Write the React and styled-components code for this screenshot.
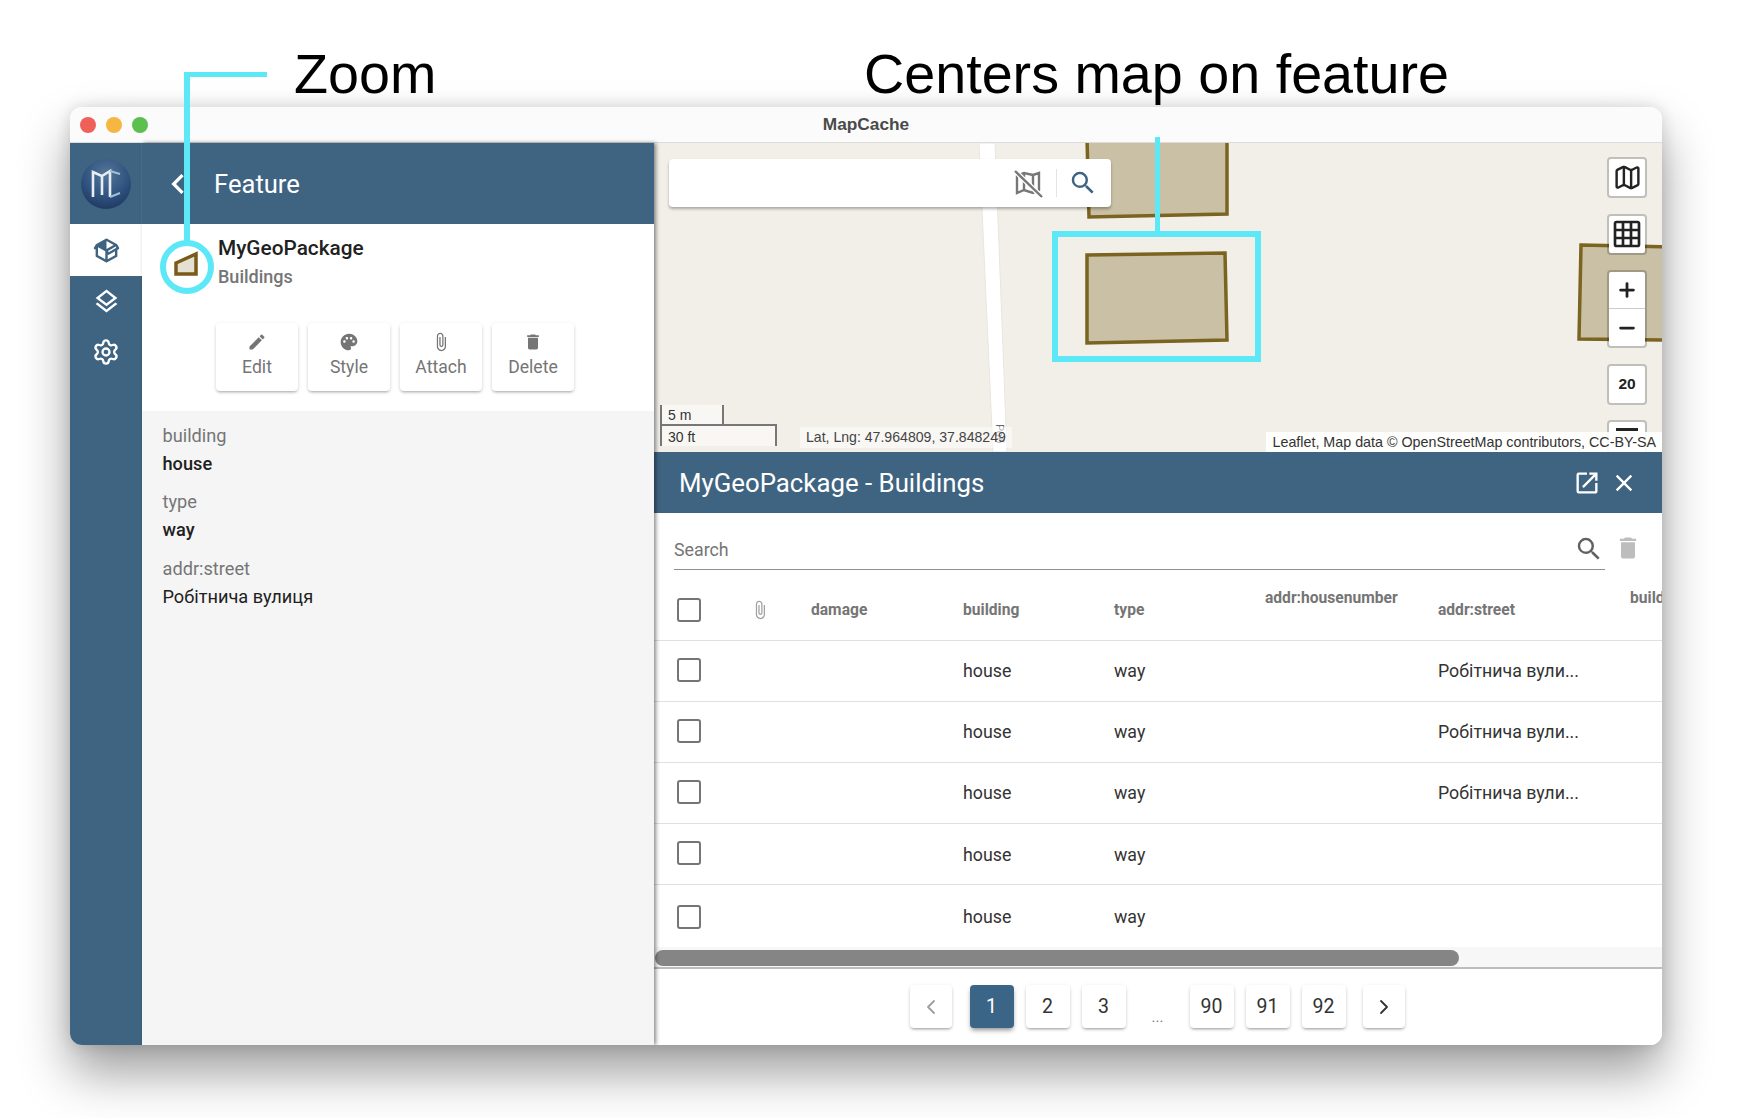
import styled, { createGlobalStyle } from 'styled-components';
import { MdEdit, MdPalette, MdAttachFile, MdDelete, MdSearch, MdClose, MdOpenInNew, MdChevronLeft, MdGridOn } from 'react-icons/md';
import { Map as MapIcon, Settings, Plus, Minus, ChevronLeft, ChevronRight } from 'lucide-react';

const BLUE = '#3f6482';
const CYAN = '#5de8f7';

const GlobalStyle = createGlobalStyle`
    html, body {
        margin: 0;
        background: #fff;
        overflow: hidden;
    }
    * { box-sizing: border-box; }
`;

const Page = styled.div`
    position: relative;
    width: 1740px;
    height: 1118px;
    padding: 107px 0 0 70px;
    overflow: hidden;
    font-family: Roboto, "Liberation Sans", sans-serif;
    color: #212121;
`;

const Window = styled.div`
    width: 1592px;
    height: 938px;
    display: flex;
    flex-direction: column;
    border-radius: 12px;
    overflow: hidden;
    background: #fff;
    box-shadow: 0 28px 50px rgba(0, 0, 0, .38), 0 0 16px rgba(0, 0, 0, .14);
`;

const TitleBar = styled.div`
    position: relative;
    flex: 0 0 36px;
    display: flex;
    align-items: center;
    justify-content: center;
    background: #fbfbfb;
    border-bottom: 1px solid #dcdcdc;
    font: bold 17.3px "Liberation Sans", Arial, sans-serif;
    color: #4a4a4a;
`;

const Lights = styled.div`
    position: absolute;
    left: 10px;
    top: 10px;
    display: flex;
    gap: 10px;
`;

const Light = styled.span`
    width: 16px;
    height: 16px;
    border-radius: 50%;
    background: ${p => p.$color};
`;

const Body = styled.div`
    flex: 1;
    display: flex;
    min-height: 0;
`;

const Sidebar = styled.div`
    flex: 0 0 72px;
    display: flex;
    flex-direction: column;
    background: ${BLUE};
`;

const LogoCell = styled.div`
    height: 81px;
    display: flex;
    align-items: center;
    justify-content: center;
    border-right: 1px solid #4c7090;
`;

const NavItem = styled.div`
    height: ${p => p.$h}px;
    display: flex;
    align-items: center;
    justify-content: center;
    color: ${p => (p.$active ? BLUE : '#fff')};
    background: ${p => (p.$active ? '#fff' : 'transparent')};
`;

const LeftPanel = styled.div`
    position: relative;
    z-index: 2;
    flex: 0 0 512px;
    display: flex;
    flex-direction: column;
    background: #f5f5f5;
    box-shadow: 2px 0 4px rgba(0, 0, 0, .45);
`;

const PanelHeader = styled.div`
    flex: 0 0 81px;
    display: flex;
    align-items: center;
    padding-left: 16px;
    background: ${BLUE};
    color: #fff;
    font-size: 25.6px;
`;

const BackIcon = styled(MdChevronLeft)`
    margin-right: 16px;
`;

const FeatureCard = styled.div`
    flex: 0 0 187px;
    background: #fff;
    padding-top: 10px;
`;

const FeatureTitle = styled.div`
    display: flex;
`;

const FeatureGlyph = styled.div`
    flex: 0 0 76px;
    display: flex;
    justify-content: center;
    padding: 17px 0 0 12px;
`;

const FeatureName = styled.div`
    font-size: 20.8px;
    font-weight: 500;
    line-height: 28px;
`;

const FeatureLayer = styled.div`
    font-size: 18px;
    font-weight: 500;
    line-height: 30px;
    color: #757575;
`;

const ActionRow = styled.div`
    display: flex;
    gap: 10px;
    margin: 31px 0 0 74px;
`;

const ActionButton = styled.div`
    width: 82px;
    height: 68px;
    display: flex;
    flex-direction: column;
    align-items: center;
    padding-top: 9px;
    background: #fff;
    border-radius: 4px;
    font-size: 17.6px;
    line-height: 30px;
    color: #757575;
    box-shadow: 0 2px 3px -1px rgba(0, 0, 0, .3), 0 1px 4px rgba(0, 0, 0, .1);
`;

const Details = styled.div`
    padding: 11px 20px 11px 20.5px;
`;

const DetailLabel = styled.div`
    font-size: 18.2px;
    line-height: 28px;
    color: #757575;
`;

const DetailValue = styled.div`
    font-size: 18.2px;
    font-weight: ${p => (p.$plain ? 400 : 500)};
    line-height: 28px;
    margin-bottom: 10.4px;
    color: #212121;
`;

const RightColumn = styled.div`
    flex: 1;
    min-width: 0;
    display: flex;
    flex-direction: column;
`;

const MapArea = styled.div`
    position: relative;
    flex: 0 0 309px;
    overflow: hidden;
    background: #f2efe9;
    font-family: "Liberation Sans", Arial, sans-serif;
`;

const MapDrawing = styled.svg`
    position: absolute;
    inset: 0;
`;

const SearchCard = styled.div`
    position: absolute;
    left: 15px;
    top: 16px;
    width: 442px;
    height: 48px;
    display: flex;
    align-items: center;
    justify-content: flex-end;
    padding-right: 13px;
    background: #fff;
    border-radius: 4px;
    box-shadow: 0 2px 3px rgba(0, 0, 0, .3);
`;

const SearchDivider = styled.span`
    width: 1px;
    height: 28px;
    margin: 0 11px 0 13px;
    background: #e4e4e4;
`;

const ControlStack = styled.div`
    position: absolute;
    top: 14px;
    right: 15px;
    display: flex;
    flex-direction: column;
    gap: 15.5px;
`;

const ControlButton = styled.div`
    width: 40px;
    height: 41px;
    display: flex;
    align-items: center;
    justify-content: center;
    background: #fff;
    border: 2px solid rgba(0, 0, 0, .2);
    border-radius: 4px;
    background-clip: padding-box;
    font: bold 15.5px "Liberation Sans", Arial, sans-serif;
    color: #222;
`;

const ZoomGroup = styled.div`
    width: 40px;
    display: flex;
    flex-direction: column;
    background: #fff;
    border: 2px solid rgba(0, 0, 0, .2);
    border-radius: 4px;
    background-clip: padding-box;
`;

const ZoomButton = styled.div`
    height: 37px;
    display: flex;
    align-items: center;
    justify-content: center;
    color: #222;
    border-bottom: ${p => (p.$first ? '1px solid #ccc' : 'none')};
`;

const MenuLine = styled.span`
    width: 22px;
    height: 3px;
    margin-bottom: 22px;
    background: #222;
`;

const ScaleBox = styled.div`
    position: absolute;
    left: 6px;
    bottom: 6px;
    display: flex;
    flex-direction: column;
    font-size: 14px;
    color: #333;
`;

const ScaleLine = styled.div`
    width: ${p => p.$w}px;
    height: ${p => p.$h}px;
    padding-left: 6px;
    line-height: ${p => p.$h}px;
    background: rgba(255, 255, 255, .5);
    border: 2px solid #777;
    border-top: ${p => (p.$top ? 'none' : '2px solid #777')};
    border-bottom: ${p => (p.$top ? '2px solid #777' : 'none')};
    margin-top: ${p => (p.$top ? 0 : -2)}px;
`;

const LatLng = styled.div`
    position: absolute;
    left: 146px;
    bottom: 4px;
    height: 21px;
    padding: 0 6px;
    line-height: 21px;
    font-size: 14.1px;
    color: #444;
    background: rgba(255, 255, 255, .5);
`;

const Attribution = styled.div`
    position: absolute;
    right: 0;
    bottom: 0;
    height: 20px;
    padding: 0 6px;
    line-height: 20px;
    font-size: 14.3px;
    color: #333;
    background: rgba(255, 255, 255, .9);
`;

const TablePanel = styled.div`
    position: relative;
    flex: 1;
    min-height: 0;
    display: flex;
    flex-direction: column;
    background: #fff;
`;

const TableTitle = styled.div`
    flex: 0 0 61px;
    display: flex;
    align-items: center;
    gap: 9px;
    padding: 0 24px 0 25px;
    background: ${BLUE};
    color: #fff;
    font-size: 25.8px;
`;

const TitleText = styled.span`
    flex: 1;
`;

const SearchRow = styled.div`
    flex: 0 0 57px;
    display: flex;
    align-items: flex-start;
    padding: 0 20px 0 20px;
`;

const SearchField = styled.div`
    flex: 1;
    height: 57px;
    display: flex;
    align-items: center;
    justify-content: space-between;
    padding: 16px 1px 0 0;
    border-bottom: 1.5px solid #8f8f8f;
    font-size: 17.8px;
    color: #757575;
`;

const TrashWrap = styled.div`
    width: 37px;
    height: 57px;
    display: flex;
    align-items: center;
    justify-content: flex-end;
    padding-top: 12px;
    color: #bdbdbd;
`;

const TableClip = styled.div`
    flex: 0 0 377px;
    overflow: hidden;
`;

const Table = styled.table`
    width: 1054px;
    table-layout: fixed;
    border-collapse: collapse;
`;

const HeadCell = styled.th`
    height: 70px;
    padding: 10px 0 ${p => (p.$raised ? 24 : 0)}px 22px;
    text-align: left;
    font-size: 15.6px;
    font-weight: 700;
    white-space: nowrap;
    color: #757575;
    border-bottom: 1px solid #e0e0e0;
`;

const BodyCell = styled.td`
    height: 61.2px;
    padding: ${p => (p.$last ? 2 : 0)}px 0 0 22px;
    font-size: 17.8px;
    color: #333;
    border-bottom: ${p => (p.$last ? 'none' : '1px solid #e0e0e0')};
`;

const CheckCell = styled(BodyCell)`
    padding: ${p => (p.$last ? '2px 0 0 23px' : '0 0 2px 23px')};
`;

const CheckHead = styled(HeadCell)`
    padding-left: 23px;
`;

const IconHead = styled(HeadCell)`
    padding-left: 0;
    text-align: center;
    color: #a0a0a0;
    svg { display: block; margin: 0 auto; }
`;

const CheckBox = styled.div`
    width: 24px;
    height: 24px;
    border: 2.5px solid #757575;
    border-radius: 3px;
`;

const ScrollTrack = styled.div`
    flex: 0 0 22px;
    padding: 3px 0 0 1px;
    background: #f7f7f7;
    border-bottom: 2px solid #bdbdbd;
`;

const ScrollThumb = styled.div`
    width: 804px;
    height: 16px;
    border-radius: 8px;
    background: #858585;
`;

const Pager = styled.div`
    display: flex;
    justify-content: center;
    gap: 12px;
    padding: 16px 2px 0 0;
`;

const PageButton = styled.div`
    width: ${p => (p.$arrow ? 42 : 44)}px;
    height: 43px;
    display: flex;
    align-items: center;
    justify-content: center;
    margin: ${p => p.$margin || 0};
    border-radius: 4px;
    font-size: 19.5px;
    background: ${p => (p.$active ? '#3b6587' : '#fff')};
    color: ${p => (p.$active ? '#fff' : p.$muted ? '#9e9e9e' : '#333')};
    box-shadow: ${p => (p.$active
        ? '0 3px 5px -1px rgba(0, 0, 0, .45)'
        : '0 2px 3px -1px rgba(0, 0, 0, .35), 0 1px 4px rgba(0, 0, 0, .1)')};
`;

const PageDots = styled.div`
    width: 40px;
    height: 43px;
    display: flex;
    align-items: flex-end;
    justify-content: center;
    padding-bottom: 2px;
    font-size: 15px;
    color: #757575;
`;

const CalloutText = styled.div`
    position: absolute;
    z-index: 10;
    top: 41px;
    left: ${p => p.$left}px;
    font: 55.7px/66px "Liberation Sans", Arial, sans-serif;
    color: #000;
    white-space: nowrap;
`;

const CalloutBar = styled.div`
    position: absolute;
    z-index: 10;
    left: ${p => p.$left}px;
    top: ${p => p.$top}px;
    width: ${p => p.$w}px;
    height: ${p => p.$h}px;
    background: ${CYAN};
`;

const CalloutRing = styled.div`
    position: absolute;
    z-index: 10;
    left: 160px;
    top: 240px;
    width: 54px;
    height: 54px;
    border: 6px solid ${CYAN};
    border-radius: 50%;
`;

const CalloutFrame = styled.div`
    position: absolute;
    z-index: 10;
    left: 1052px;
    top: 231px;
    width: 209px;
    height: 131px;
    border: 6px solid ${CYAN};
`;

const Logo = () => (
    <svg width="50" height="50" viewBox="0 0 50 50">
        <defs>
            <radialGradient id="logoFill" cx="50%" cy="30%" r="75%">
                <stop offset="0%" stopColor="#55779a" />
                <stop offset="60%" stopColor="#2f527e" />
                <stop offset="100%" stopColor="#1d3560" />
            </radialGradient>
        </defs>
        <circle cx="25" cy="25" r="25" fill="url(#logoFill)" />
        <path d="M12 38V13l9 4v19M21 17l8-5v26" fill="none" stroke="#e8eef3" strokeWidth="2.6" />
        <path d="M29 12l10 3M29 38l10-4" fill="none" stroke="#9fc0d8" strokeWidth="2" />
    </svg>
);

const PackageIcon = () => (
    <svg width="29" height="29" viewBox="0 0 24 24" fill="currentColor">
        <path d="M2,10.96C1.5,10.68 1.35,10.07 1.63,9.59L3.13,7C3.24,6.8 3.41,6.66 3.6,6.58L11.43,2.18C11.59,2.06 11.79,2 12,2C12.21,2 12.41,2.06 12.57,2.18L20.47,6.62C20.66,6.72 20.82,6.88 20.91,7.08L22.36,9.6C22.64,10.08 22.47,10.69 22,10.96L21,11.54V16.5C21,16.88 20.79,17.21 20.47,17.38L12.57,21.82C12.41,21.94 12.21,22 12,22C11.79,22 11.59,21.94 11.43,21.82L3.53,17.38C3.21,17.21 3,16.88 3,16.5V10.96C2.7,11.13 2.32,11.14 2,10.96M12,4.15V4.15L12,10.85V10.85L17.96,7.5L12,4.15M5,15.91L11,19.29V12.58L5,9.21V15.91M19,15.91V12.69L14,15.59C13.67,15.77 13.3,15.76 13,15.6V19.29L19,15.91M13.85,13.36L20.13,9.73L19.55,8.72L13.27,12.35L13.85,13.36Z" />
    </svg>
);

const LayersIcon = () => (
    <svg width="29" height="29" viewBox="0 0 24 24" fill="currentColor">
        <path d="M12,18.54L19.37,12.8L21,14.07L12,21.07L3,14.07L4.62,12.81L12,18.54M12,16L3,9L12,2L21,9L12,16M12,4.53L6.26,9L12,13.47L17.74,9L12,4.53Z" />
    </svg>
);

const MapOffIcon = () => (
    <svg width="30" height="30" viewBox="0 0 30 30" fill="none" stroke="#777" strokeWidth="2.4">
        <path d="M4 8 L4 25 L11 22 L20 25 L26 22 L26 5 L20 7 L11 5 Z" />
        <path d="M11 5 V22 M20 7 V25" />
        <path d="M2 3 L29 29" stroke="#fff" strokeWidth="5" />
        <path d="M2 3 L29 29" />
    </svg>
);

const PolygonGlyph = () => (
    <svg width="26" height="26" viewBox="0 0 26 26">
        <path d="M3 12 L23 3 V23 H3 Z" fill="#e4e1d2" stroke="#7a5a18" strokeWidth="3.5" />
    </svg>
);

// coordinates are relative to the map's top left corner
const MapShapes = () => (
    <MapDrawing width="1008" height="309" viewBox="0 0 1008 309">
        <path d="M325 0 L341 0 L353 309 L339 309 Z" fill="#fff" stroke="#e9e6df" strokeWidth="1" />
        <path d="M433 -5 H573 L573 71 L435 74 Z" fill="#c9c0a6" stroke="#7a6420" strokeWidth="3.5" />
        <path d="M433 112 L571 110 L573 197 L433 200 Z" fill="#c9c0a6" stroke="#7a6420" strokeWidth="3.5" />
        <path d="M927 102 L1015 104 V197 L925 196 Z" fill="#c9c0a6" stroke="#7a6420" strokeWidth="3.5" />
        <text x="0" y="0" transform="translate(342 281) rotate(90)" fontSize="11" fill="#666">Роб</text>
    </MapDrawing>
);

const rows = [
    { street: true },
    { street: true },
    { street: true },
    { street: false },
    { street: false },
];

const headers = ['damage', 'building', 'type', 'addr:housenumber', 'addr:street', 'building:levels'];

const App = () => (
    <Page>
        <GlobalStyle />
        <Window>
            <TitleBar>
                <Lights>
                    <Light $color="#f0605a" />
                    <Light $color="#f6b742" />
                    <Light $color="#5cc04f" />
                </Lights>
                MapCache
            </TitleBar>
            <Body>
                <Sidebar>
                    <LogoCell><Logo /></LogoCell>
                    <NavItem $h={52} $active><PackageIcon /></NavItem>
                    <NavItem $h={50}><LayersIcon /></NavItem>
                    <NavItem $h={52}><Settings size={28} strokeWidth={2} /></NavItem>
                </Sidebar>
                <LeftPanel>
                    <PanelHeader>
                        <BackIcon size={40} />
                        Feature
                    </PanelHeader>
                    <FeatureCard>
                        <FeatureTitle>
                            <FeatureGlyph><PolygonGlyph /></FeatureGlyph>
                            <div>
                                <FeatureName>MyGeoPackage</FeatureName>
                                <FeatureLayer>Buildings</FeatureLayer>
                            </div>
                        </FeatureTitle>
                        <ActionRow>
                            <ActionButton><MdEdit size={20} />Edit</ActionButton>
                            <ActionButton><MdPalette size={20} />Style</ActionButton>
                            <ActionButton><MdAttachFile size={20} />Attach</ActionButton>
                            <ActionButton><MdDelete size={20} />Delete</ActionButton>
                        </ActionRow>
                    </FeatureCard>
                    <Details>
                        <DetailLabel>building</DetailLabel>
                        <DetailValue>house</DetailValue>
                        <DetailLabel>type</DetailLabel>
                        <DetailValue>way</DetailValue>
                        <DetailLabel>addr:street</DetailLabel>
                        <DetailValue $plain>Робітнича вулиця</DetailValue>
                    </Details>
                </LeftPanel>
                <RightColumn>
                    <MapArea>
                        <MapShapes />
                        <SearchCard>
                            <MapOffIcon />
                            <SearchDivider />
                            <MdSearch size={30} color="#3b6482" />
                        </SearchCard>
                        <ControlStack>
                            <ControlButton><MapIcon size={29} strokeWidth={2} /></ControlButton>
                            <ControlButton><MdGridOn size={32} /></ControlButton>
                            <ZoomGroup>
                                <ZoomButton $first><Plus size={22} strokeWidth={3} /></ZoomButton>
                                <ZoomButton><Minus size={22} strokeWidth={3} /></ZoomButton>
                            </ZoomGroup>
                            <ControlButton>20</ControlButton>
                            <ControlButton><MenuLine /></ControlButton>
                        </ControlStack>
                        <ScaleBox>
                            <ScaleLine $w={64} $h={21} $top>5 m</ScaleLine>
                            <ScaleLine $w={117} $h={22}>30 ft</ScaleLine>
                        </ScaleBox>
                        <LatLng>Lat, Lng: 47.964809, 37.848249</LatLng>
                        <Attribution>Leaflet, Map data © OpenStreetMap contributors, CC-BY-SA</Attribution>
                    </MapArea>
                    <TablePanel>
                        <TableTitle>
                            <TitleText>MyGeoPackage - Buildings</TitleText>
                            <MdOpenInNew size={28} />
                            <MdClose size={28} />
                        </TableTitle>
                        <SearchRow>
                            <SearchField>
                                Search
                                <MdSearch size={30} color="#616161" />
                            </SearchField>
                            <TrashWrap><MdDelete size={28} /></TrashWrap>
                        </SearchRow>
                        <TableClip>
                            <Table>
                                <colgroup>
                                    {[76, 59, 152, 151, 151, 173, 192, 100].map((w, i) => <col key={i} width={w} />)}
                                </colgroup>
                                <thead>
                                    <tr>
                                        <CheckHead><CheckBox /></CheckHead>
                                        <IconHead><MdAttachFile size={20} /></IconHead>
                                        {headers.map(h => (
                                            <HeadCell key={h} $raised={h === 'addr:housenumber' || h === 'building:levels'}>{h}</HeadCell>
                                        ))}
                                    </tr>
                                </thead>
                                <tbody>
                                    {rows.map((row, i) => {
                                        const last = i === rows.length - 1;
                                        return (
                                            <tr key={i}>
                                                <CheckCell $last={last}><CheckBox /></CheckCell>
                                                <BodyCell $last={last} />
                                                <BodyCell $last={last} />
                                                <BodyCell $last={last}>house</BodyCell>
                                                <BodyCell $last={last}>way</BodyCell>
                                                <BodyCell $last={last} />
                                                <BodyCell $last={last}>{row.street ? 'Робітнича вули...' : null}</BodyCell>
                                                <BodyCell $last={last} />
                                            </tr>
                                        );
                                    })}
                                </tbody>
                            </Table>
                        </TableClip>
                        <ScrollTrack><ScrollThumb /></ScrollTrack>
                        <Pager>
                            <PageButton $arrow $muted $margin="0 6px 0 0"><ChevronLeft size={24} strokeWidth={1.8} /></PageButton>
                            <PageButton $active>1</PageButton>
                            <PageButton>2</PageButton>
                            <PageButton>3</PageButton>
                            <PageDots>...</PageDots>
                            <PageButton>90</PageButton>
                            <PageButton>91</PageButton>
                            <PageButton>92</PageButton>
                            <PageButton $arrow $margin="0 0 0 5px"><ChevronRight size={24} strokeWidth={1.8} /></PageButton>
                        </Pager>
                    </TablePanel>
                </RightColumn>
            </Body>
        </Window>
        <CalloutText $left={294}>Zoom</CalloutText>
        <CalloutText $left={864}>Centers map on feature</CalloutText>
        <CalloutBar $left={184} $top={72} $w={83} $h={5} />
        <CalloutBar $left={184} $top={72} $w={6} $h={170} />
        <CalloutRing />
        <CalloutBar $left={1155} $top={137} $w={5} $h={95} />
        <CalloutFrame />
    </Page>
);

export default App;
